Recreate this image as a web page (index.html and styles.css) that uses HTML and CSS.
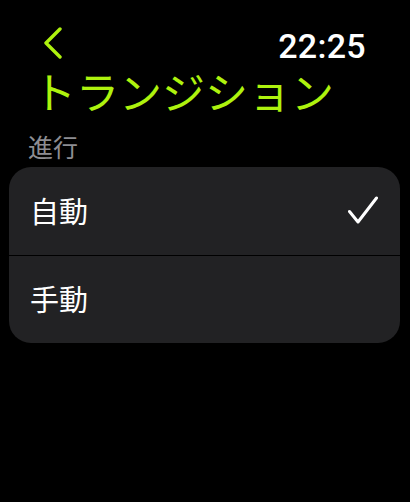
FILE: index.html
```html
<!DOCTYPE html>
<html lang="ja">

<head>
    <meta charset="UTF-8">
    <meta name="viewport" content="width=device-width, initial-scale=1.0">
    <title>トランジション</title>
    <link rel="stylesheet" href="styles.css">
</head>

<body>
    <div class="screen">
        <div class="top-bar">
            <a class="back" href="#" aria-label="戻る">
                <svg width="20" height="32" viewBox="0 0 20 32">
                    <path d="M17 2 L3 16 L17 30" fill="none" stroke="currentColor" stroke-width="3.4"
                        stroke-linecap="round" stroke-linejoin="round" />
                </svg>
            </a>
            <span class="clock">22:25</span>
        </div>
        <h1 class="page-title">トランジション</h1>

        <div class="section-label">進行</div>
        <ul class="option-list">
            <li class="option selected">
                <span>自動</span>
                <svg class="check" width="32" height="30" viewBox="0 0 32 30">
                    <path d="M2.5 15.5 L11 26 L29.5 2" fill="none" stroke="currentColor" stroke-width="3"
                        stroke-linecap="round" stroke-linejoin="round" />
                </svg>
            </li>
            <li class="option">
                <span>手動</span>
            </li>
        </ul>
    </div>
</body>

</html>
```

FILE: styles.css
```css
* {
    box-sizing: border-box;
}

body {
    margin: 0;
    background-color: #000;
    font-family: "Noto Sans CJK JP", "Noto Sans", sans-serif;
    color: #fff;
}

.screen {
    width: 410px;
    height: 502px;
    overflow: hidden;
}

.top-bar {
    display: flex;
    justify-content: space-between;
    align-items: flex-start;
    padding: 27px 44px 0 43px;
    height: 63px;
}

.back {
    display: block;
    color: #aef20e;
    line-height: 0;
}

.clock {
    font-family: Roboto, "Liberation Sans", sans-serif;
    font-weight: 500;
    font-size: 34px;
    line-height: 30px;
    margin-top: 4px;
    letter-spacing: 0.3px;
}

.page-title {
    margin: 0 0 0 33px;
    font-size: 43px;
    font-weight: 400;
    line-height: 54px;
    color: #aef20e;
}

.section-label {
    margin: 14px 0 0 28px;
    font-size: 25px;
    line-height: 30px;
    color: #8d8d92;
}

.option-list {
    list-style: none;
    margin: 6px 10px 0 9px;
    padding: 0;
    background-color: #222224;
    border-radius: 22px;
    overflow: hidden;
}

.option {
    display: flex;
    justify-content: space-between;
    align-items: center;
    height: 88px;
    padding: 0 21px 3px 21px;
    font-size: 29px;
}

.option + .option {
    border-top: 1px solid #000;
}

.check {
    display: block;
    color: #fff;
    margin-top: 3px;
}
```
